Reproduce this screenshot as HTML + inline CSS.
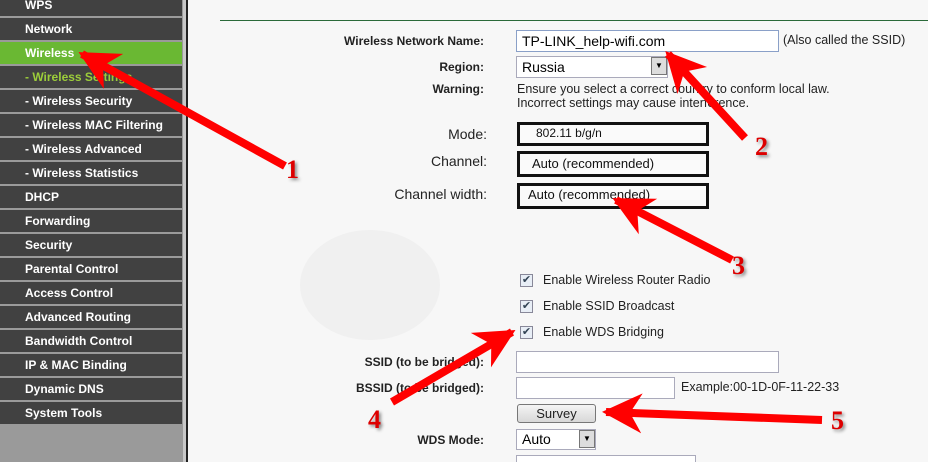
<!DOCTYPE html>
<html><head><meta charset="utf-8"><style>
*{margin:0;padding:0;box-sizing:border-box}
html,body{width:928px;height:462px;overflow:hidden}
body{background:#f7f7f7;font-family:"Liberation Sans",Arial,sans-serif;position:relative}
#side{position:absolute;left:0;top:0;width:183px;height:462px;background:#9a9a9a}
.it{position:absolute;left:0;width:182px;height:22px;background:#414141;color:#fff;font-weight:bold;font-size:12px;line-height:22px;padding-left:25px}
#rb{position:absolute;left:183px;top:0;width:4px;height:462px;background:#c8c8c8}
#rb2{position:absolute;left:186px;top:0;width:2px;height:462px;background:#222}
.abs{position:absolute}
.lbl{position:absolute;font-size:12px;font-weight:bold;color:#222;text-align:right;width:200px}
.big{position:absolute;font-size:14px;color:#222;text-align:right;width:200px}
.inp{position:absolute;background:#fff;border:1px solid #aab;font-size:13px;padding-left:5px}
.bx{position:absolute;border:3px solid #111;background:#fafafa;font-size:13px;color:#111}
.cb{position:absolute;width:13px;height:13px;border:1px solid #889;background:#e8eef6;font-size:11px;line-height:11px;text-align:center;color:#345}
.ct{position:absolute;font-size:12.5px;color:#222}
.num{position:absolute;font-family:"Liberation Serif",serif;font-weight:bold;color:#d00;font-size:26px;text-shadow:2px 2px 3px #888}
.dd{position:absolute;width:16px;height:18px;border:1px solid #777;background:#ddd;font-size:8px;text-align:center;line-height:16px}
</style></head><body>
<div id="side">
<div class="it" style="top:-6px">WPS</div>
<div class="it" style="top:18px">Network</div>
<div class="it" style="top:42px;background:#6ab833">Wireless</div>
<div class="it" style="top:66px;color:#9ccd3a">- Wireless Settings</div>
<div class="it" style="top:90px">- Wireless Security</div>
<div class="it" style="top:114px">- Wireless MAC Filtering</div>
<div class="it" style="top:138px">- Wireless Advanced</div>
<div class="it" style="top:162px">- Wireless Statistics</div>
<div class="it" style="top:186px">DHCP</div>
<div class="it" style="top:210px">Forwarding</div>
<div class="it" style="top:234px">Security</div>
<div class="it" style="top:258px">Parental Control</div>
<div class="it" style="top:282px">Access Control</div>
<div class="it" style="top:306px">Advanced Routing</div>
<div class="it" style="top:330px">Bandwidth Control</div>
<div class="it" style="top:354px">IP &amp; MAC Binding</div>
<div class="it" style="top:378px">Dynamic DNS</div>
<div class="it" style="top:402px">System Tools</div>
</div>
<div id="rb"></div><div id="rb2"></div>
<div class="abs" style="left:220px;top:20px;width:708px;height:1px;background:#2a6a3a"></div>

<div class="lbl" style="left:284px;top:34px">Wireless Network Name:</div>
<div class="inp" style="left:516px;top:30px;width:263px;height:22px;border-color:#8aa0c8;line-height:20px;font-size:14px">TP-LINK_help-wifi.com</div>
<div class="ct" style="left:783px;top:33px">(Also called the SSID)</div>
<div class="lbl" style="left:284px;top:60px">Region:</div>
<div class="inp" style="left:516px;top:56px;width:152px;height:22px;line-height:20px;font-size:14px">Russia</div>
<div class="dd" style="left:651px;top:57px">▼</div>
<div class="lbl" style="left:284px;top:82px">Warning:</div>
<div class="ct" style="left:517px;top:82px;line-height:14px">Ensure you select a correct country to conform local law.<br>Incorrect settings may cause interference.</div>

<div class="big" style="left:287px;top:126px">Mode:</div>
<div class="bx" style="left:517px;top:122px;width:192px;height:24px;padding-left:16px;line-height:17px;font-size:12px">802.11 b/g/n</div>
<div class="big" style="left:287px;top:153px">Channel:</div>
<div class="bx" style="left:517px;top:151px;width:192px;height:26px;padding-left:12px;line-height:20px">Auto (recommended)</div>
<div class="big" style="left:287px;top:186px">Channel width:</div>
<div class="bx" style="left:517px;top:183px;width:192px;height:26px;padding-left:8px;line-height:18px">Auto (recommended)</div>

<div class="abs" style="left:300px;top:230px;width:140px;height:110px;border-radius:50%;background:#f0f0f0"></div>

<div class="cb" style="left:520px;top:274px">✔</div><div class="ct" style="left:543px;top:273px">Enable Wireless Router Radio</div>
<div class="cb" style="left:520px;top:300px">✔</div><div class="ct" style="left:543px;top:299px">Enable SSID Broadcast</div>
<div class="cb" style="left:520px;top:326px">✔</div><div class="ct" style="left:543px;top:325px">Enable WDS Bridging</div>

<div class="lbl" style="left:284px;top:355px">SSID (to be bridged):</div>
<div class="inp" style="left:516px;top:351px;width:263px;height:22px"></div>
<div class="lbl" style="left:284px;top:381px">BSSID (to be bridged):</div>
<div class="inp" style="left:516px;top:377px;width:159px;height:22px"></div>
<div class="ct" style="left:681px;top:380px">Example:00-1D-0F-11-22-33</div>
<div class="abs" style="left:517px;top:404px;width:79px;height:19px;border:1px solid #777;border-radius:3px;background:linear-gradient(#f4f4f4,#d8d8d8);font-size:13px;text-align:center;line-height:17px;color:#222">Survey</div>
<div class="lbl" style="left:284px;top:433px">WDS Mode:</div>
<div class="inp" style="left:516px;top:429px;width:80px;height:21px;line-height:19px;font-size:14px">Auto</div>
<div class="dd" style="left:579px;top:430px">▼</div>
<div class="inp" style="left:516px;top:455px;width:180px;height:21px"></div>

<svg class="abs" style="left:0;top:0" width="928" height="462">
<defs>
<marker id="h" viewBox="0 0 10 10" refX="9" refY="5" markerWidth="5" markerHeight="6" orient="auto" markerUnits="strokeWidth">
<path d="M0,0 L10,5 L0,10 L3,5 Z" fill="#f00"/>
</marker>
</defs>
<g stroke="#f00" stroke-width="8" fill="none" marker-end="url(#h)">
<line x1="285" y1="166" x2="82" y2="54"/>
<line x1="745" y1="138" x2="668" y2="54"/>
<line x1="732" y1="260" x2="616" y2="200"/>
<line x1="392" y1="402" x2="512" y2="332"/>
<line x1="822" y1="420" x2="606" y2="412"/>
</g>
</svg>
<div class="num" style="left:286px;top:155px">1</div>
<div class="num" style="left:755px;top:132px">2</div>
<div class="num" style="left:732px;top:251px">3</div>
<div class="num" style="left:368px;top:405px">4</div>
<div class="num" style="left:831px;top:406px">5</div>
</body></html>
